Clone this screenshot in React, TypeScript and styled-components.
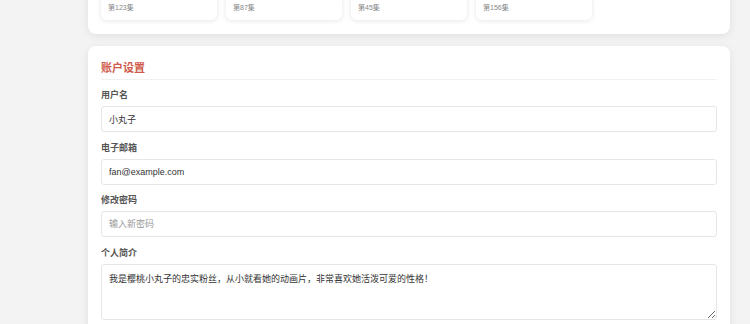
import React from 'react'
import styled, { createGlobalStyle } from 'styled-components'

const GlobalStyle = createGlobalStyle`
  * { box-sizing: border-box; }
  body {
    margin: 0;
    background: #f3f3f3;
    font-family: "Liberation Sans", "Noto Sans CJK SC", sans-serif;
    color: #333;
  }
`

const Page = styled.main`
  /* the page is shown scrolled down a little */
  margin-top: -144px;
  padding: 20px 20px 20px 88px;
  display: flex;
  flex-direction: column;
  gap: 12px;
`

const Card = styled.section<{ $top?: number }>`
  background: #fff;
  border-radius: 8px;
  box-shadow: 0 2px 8px rgba(0, 0, 0, 0.08);
  padding: ${({ $top = 14 }) => $top}px 13px 14px;
`

const CardTitle = styled.h2<{ $underline?: boolean }>`
  margin: 0 0 12px;
  font-size: 11px;
  line-height: 15px;
  font-weight: 600;
  color: #cf5a4b;
  ${({ $underline }) => $underline && `
    padding-bottom: 3px;
    border-bottom: 1px solid #f1f1f1;
    margin-bottom: 9px;
  `}
`

const EpisodeGrid = styled.div`
  display: grid;
  grid-template-columns: repeat(5, 1fr);
  gap: 9px;
`

const EpisodeCard = styled.div`
  background: #fff;
  border-radius: 6px;
  box-shadow: 0 1px 5px rgba(0, 0, 0, 0.1);
  overflow: hidden;
`

const Thumb = styled.div`
  height: 65px;
  background: linear-gradient(135deg, #ffd9d3, #ffeecc);
`

const EpisodeBody = styled.div`
  padding: 6px 7px 7px;
`

const EpisodeTitle = styled.div`
  font-size: 9px;
  line-height: 13px;
  color: #333;
`

const EpisodeNo = styled.div`
  margin-top: 2px;
  font-size: 7px;
  line-height: 10px;
  color: #888;
`

const Field = styled.div`
  margin-bottom: 9.7px;
`

const Label = styled.label`
  display: block;
  font-size: 9px;
  line-height: 13px;
  font-weight: 600;
  color: #555;
  margin-bottom: 4px;
`

const TextInput = styled.input`
  display: block;
  width: 100%;
  height: 26px;
  padding: 0 7px;
  border: 1px solid #e6e6e6;
  border-radius: 3px;
  font-family: inherit;
  font-size: 9px;
  color: #333;
  outline: none;

  &::placeholder {
    color: #999;
  }
`

const TextArea = styled.textarea`
  display: block;
  width: 100%;
  height: 56px;
  padding: 8px 7px;
  border: 1px solid #e6e6e6;
  border-radius: 3px;
  font-family: inherit;
  font-size: 9px;
  line-height: 1.5;
  color: #333;
  outline: none;
`

const episodes = [
  { title: '樱桃小丸子 第一季', no: '第123集' },
  { title: '樱桃小丸子 第二季', no: '第87集' },
  { title: '樱桃小丸子 剧场版', no: '第45集' },
  { title: '樱桃小丸子 特别篇', no: '第156集' },
]

export default function App() {
  return (
    <>
      <GlobalStyle />
      <Page>
        <Card>
          <CardTitle>最近观看</CardTitle>
          <EpisodeGrid>
            {episodes.map(ep => (
              <EpisodeCard key={ep.no}>
                <Thumb />
                <EpisodeBody>
                  <EpisodeTitle>{ep.title}</EpisodeTitle>
                  <EpisodeNo>{ep.no}</EpisodeNo>
                </EpisodeBody>
              </EpisodeCard>
            ))}
          </EpisodeGrid>
        </Card>

        <Card $top={15}>
          <CardTitle $underline>账户设置</CardTitle>
          <Field>
            <Label>用户名</Label>
            <TextInput defaultValue="小丸子" />
          </Field>
          <Field>
            <Label>电子邮箱</Label>
            <TextInput type="email" defaultValue="fan@example.com" />
          </Field>
          <Field>
            <Label>修改密码</Label>
            <TextInput type="password" placeholder="输入新密码" />
          </Field>
          <Field>
            <Label>个人简介</Label>
            <TextArea defaultValue="我是樱桃小丸子的忠实粉丝，从小就看她的动画片，非常喜欢她活泼可爱的性格！" />
          </Field>
        </Card>
      </Page>
    </>
  )
}
